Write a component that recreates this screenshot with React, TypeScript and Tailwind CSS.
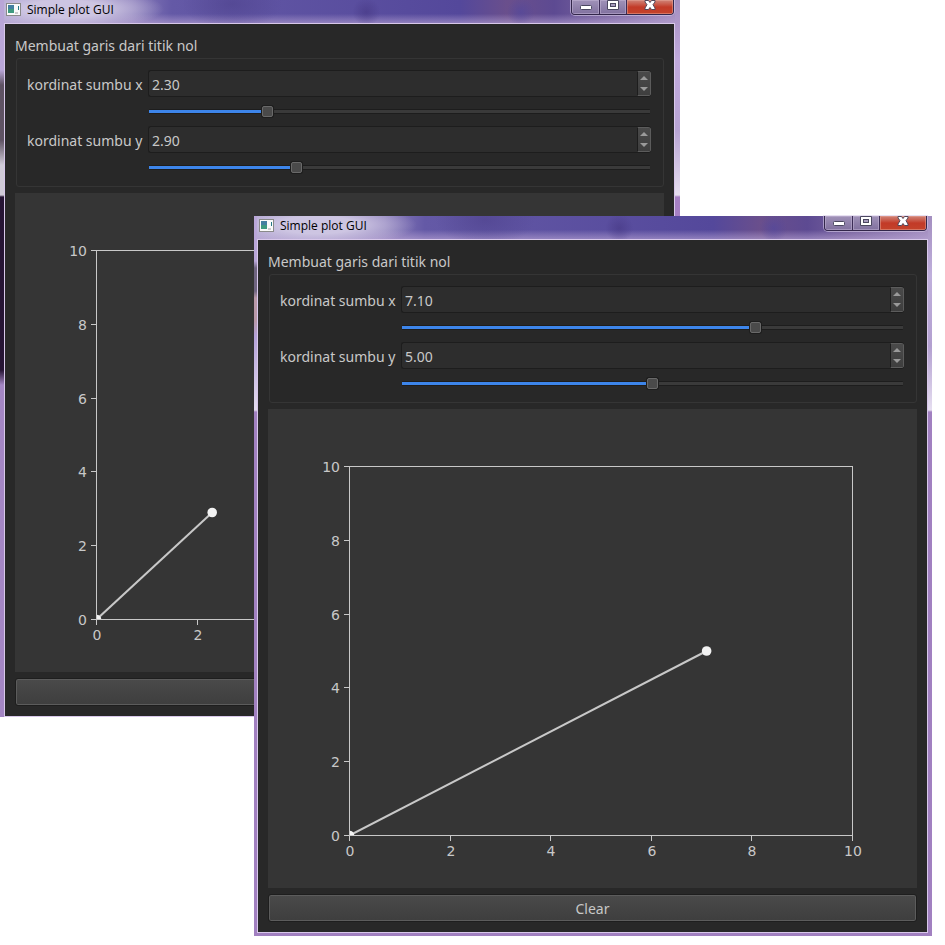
import { useId, useState } from "react";

const MAX = 10;
const TICKS = [0, 2, 4, 6, 8, 10];
const PLOT = { left: 81.5, right: 584.5, top: 57.5, bottom: 426.5 };

const toX = (v: number) => PLOT.left + ((PLOT.right - PLOT.left) * v) / MAX;
const toY = (v: number) => PLOT.bottom - ((PLOT.bottom - PLOT.top) * v) / MAX;
const snap = (v: number) => Math.floor(v) + 0.5;
const clamp = (v: number) => Math.min(MAX, Math.max(0, Number.isFinite(v) ? v : 0));

type AxisControlProps = {
  id: string;
  label: string;
  value: number;
  onChange: (value: number) => void;
};

function AxisControl({ id, label, value, onChange }: AxisControlProps) {
  const fill = (value / MAX) * 100;
  return (
    <div className="grid grid-cols-[114px_minmax(0,1fr)] gap-x-2">
      <label htmlFor={id} className="self-end whitespace-nowrap">
        {label}
      </label>
      <div className="-ml-px flex h-[27px] overflow-hidden rounded-[3px] border border-r-0 border-[#1d1d1d] bg-[#2d2d2d]">
        <input
          id={id}
          type="number"
          min={0}
          max={MAX}
          step={0.1}
          value={value.toFixed(2)}
          onChange={(e) => onChange(clamp(Number(e.target.value)))}
          className="min-w-0 flex-1 bg-transparent px-[3px] pt-[2px] outline-none [appearance:textfield] [&::-webkit-inner-spin-button]:appearance-none"
        />
        <div className="flex w-[14px] flex-col rounded-r-[2px] border border-[#5c5c5c] border-l-[#1d1d1d] bg-linear-to-b from-[#4a4a4a] to-[#3e3e3e]">
          <button
            type="button"
            aria-label={`${label} up`}
            onClick={() => onChange(clamp(value + 0.1))}
            className="flex flex-1 items-center justify-center"
          >
            <svg className="h-1 w-2" viewBox="0 0 8 4">
              <path d="M0 4 4 0 8 4Z" fill="#9a9a9a" />
            </svg>
          </button>
          <button
            type="button"
            aria-label={`${label} down`}
            onClick={() => onChange(clamp(value - 0.1))}
            className="flex flex-1 items-center justify-center"
          >
            <svg className="h-1 w-2" viewBox="0 0 8 4">
              <path d="M0 0H8L4 4Z" fill="#9a9a9a" />
            </svg>
          </button>
        </div>
      </div>
      <div className="col-start-2 mr-px flex h-[29px] items-center">
        <input
          type="range"
          aria-label={`${label} slider`}
          min={0}
          max={MAX}
          step={0.1}
          value={value}
          onChange={(e) => onChange(Number(e.target.value))}
          style={{
            backgroundImage: `linear-gradient(to right, #3d85ea ${fill}%, #3a3a3a ${fill}%)`,
          }}
          className="h-[5px] w-full appearance-none rounded-[1px] border-y border-[#1d1d1d] outline-none [&::-webkit-slider-thumb]:h-[11px] [&::-webkit-slider-thumb]:w-[11px] [&::-webkit-slider-thumb]:appearance-none [&::-webkit-slider-thumb]:rounded-[2px] [&::-webkit-slider-thumb]:border [&::-webkit-slider-thumb]:border-[#696969] [&::-webkit-slider-thumb]:bg-[#4a4a4a] [&::-webkit-slider-thumb]:shadow-[0_0_0_1px_#1d1d1d]"
        />
      </div>
    </div>
  );
}

function Plot({ x, y }: { x: number; y: number }) {
  const clipId = useId();
  return (
    <svg
      viewBox="0 0 649 479"
      className="block h-auto w-full bg-[#353535] font-['DejaVu_Sans',sans-serif] text-[14px]"
      role="img"
      aria-label="plot"
    >
      <defs>
        <clipPath id={clipId}>
          <rect x="81" y="57" width="504" height="370" />
        </clipPath>
      </defs>
      <g clipPath={`url(#${clipId})`}>
        <line x1={toX(0)} y1={toY(0)} x2={toX(x)} y2={toY(y)} stroke="#c8c8c8" strokeWidth="2" />
        <circle cx={toX(0)} cy={toY(0)} r="4.8" fill="#f2f2f2" />
        <circle cx={toX(x)} cy={toY(y)} r="4.8" fill="#f2f2f2" />
      </g>
      <rect x="81.5" y="57.5" width="503" height="369" fill="none" stroke="#c8c8c8" />
      {TICKS.map((t) => (
        <g key={t} fill="#c8c8c8">
          <path d={`M${snap(toX(t))} 427v5M81 ${snap(toY(t))}h-5`} stroke="#c8c8c8" />
          <text x={Math.floor(toX(t)) + 1} y="447" textAnchor="middle">
            {t}
          </text>
          <text x="72" y={Math.floor(toY(t)) + 6} textAnchor="end">
            {t}
          </text>
        </g>
      ))}
    </svg>
  );
}

function TitleBar() {
  return (
    <header className="flex h-[23px] justify-between bg-[radial-gradient(ellipse_100px_22px_at_60px_9px,#cdc5e2_40%,transparent),radial-gradient(ellipse_14px_14px_at_54%_12px,#46388499,transparent),radial-gradient(ellipse_14px_14px_at_77%_12px,#50479e99,transparent),radial-gradient(ellipse_50px_26px_at_34%_4px,#4d418c99,transparent),linear-gradient(to_bottom,transparent_60%,#b7a3d399),linear-gradient(to_right,#a89acb,#8a7dba_19%,#6459a6_25%,#54489b_68%,#6a4f8c_75%,#5d4a92_82%,#75609c_88%,#a48fc0)]">
      <div className="flex h-[19px] items-center gap-[6px] pl-[2px]">
        <svg className="h-[13px] w-[15px]" viewBox="0 0 15 13">
          <rect x=".5" y=".5" width="14" height="12" fill="#fafafa" stroke="#8a8a8a" />
          <rect x="2" y="2" width="6" height="8" fill="#3f9a80" />
          <rect x="2" y="2" width="6" height="4" fill="#437fa0" />
          <rect x="9" y="9" width="3" height="2" fill="#ccc" />
          <rect x="12" y="3" width="1" height="4" fill="#267a86" />
        </svg>
        <h1 className="font-['Open_Sans','Noto_Sans',sans-serif] text-[12px] leading-4 text-black">
          Simple plot GUI
        </h1>
      </div>
      <div className="mr-px flex h-[15px] overflow-hidden rounded-b-[4px] border border-t-0 border-[#32264a] shadow-[0_0_0_1px_#d9cdea99]">
        <button
          type="button"
          aria-label="Minimize"
          className="flex w-[28px] justify-center border-r border-[#3b2c55] bg-linear-to-b from-[#a092b8] to-[#81719f] pt-[5px] shadow-[inset_0_0_0_1px_#c5b8d880]"
        >
          <svg className="h-[5px] w-[12px]" viewBox="0 0 12 5">
            <rect x=".5" y=".5" width="11" height="4" rx="1" fill="#fff" stroke="#4b4860" />
          </svg>
        </button>
        <button
          type="button"
          aria-label="Maximize"
          className="flex w-[27px] justify-center border-r border-[#3b2c55] bg-linear-to-b from-[#a092b8] to-[#81719f] shadow-[inset_0_0_0_1px_#c5b8d880]"
        >
          <svg className="h-[10px] w-[12px]" viewBox="0 0 12 10">
            <path d="M.5 .5H11.500V9.500H.5Z" fill="#fff" stroke="#4b4860" />
            <rect x="3.500" y="3.500" width="5" height="3" fill="#a79bbd" stroke="#4b4860" />
          </svg>
        </button>
        <button
          type="button"
          aria-label="Close"
          className="flex w-[46px] justify-center bg-linear-to-b from-[#cf8378] via-[#c23a28] to-[#c4432b] shadow-[inset_0_0_0_1px_#e8a79a80]"
        >
          <svg className="h-[10px] w-[12px]" viewBox="0 0 12 10">
            <path
              d="M1 .5H4.500L6 2.500 7.500 .5H11V2L9 4.700 11 8V9.500H7.500L6 7.500 4.500 9.500H1V8L3 4.700 1 2Z"
              fill="#fff"
              stroke="#514759"
            />
          </svg>
        </button>
      </div>
    </header>
  );
}

type PlotWindowProps = {
  id: string;
  initialX: number;
  initialY: number;
  className: string;
};

function PlotWindow({ id, initialX, initialY, className }: PlotWindowProps) {
  const [x, setX] = useState(initialX);
  const [y, setY] = useState(initialY);
  return (
    <section className={`absolute ${className}`}>
      <TitleBar />
      <div className="border border-[#d8c8ea] bg-[#282828] px-[10px] py-[10px] text-[14px] leading-6 text-[#c8c8c8]">
        <fieldset>
          <legend>Membuat garis dari titik nol</legend>
          <div className="ml-px flex flex-col rounded-[3px] border border-[#353535] pt-[11px] pr-[12px] pb-[4px] pl-[10px]">
            <AxisControl id={`${id}-x`} label="kordinat sumbu x" value={x} onChange={setX} />
            <AxisControl id={`${id}-y`} label="kordinat sumbu y" value={y} onChange={setY} />
          </div>
        </fieldset>
        <div className="mt-[6px]">
          <Plot x={x} y={y} />
        </div>
        <button
          type="button"
          onClick={() => {
            setX(0);
            setY(0);
          }}
          className="mt-[6px] block h-[28px] w-full rounded-[3px] border border-[#1e1e1e] bg-linear-to-b from-[#4a4a4a] to-[#3e3e3e] pt-px shadow-[inset_0_0_0_1px_#5c5c5c]"
        >
          Clear
        </button>
      </div>
    </section>
  );
}

export default function App() {
  return (
    <main className="relative min-h-screen overflow-hidden bg-white font-['Noto_Sans','Open_Sans',sans-serif]">
      <PlotWindow
        id="back"
        initialX={2.3}
        initialY={2.9}
        className="top-0 right-[265px] left-0 pr-[5px] pl-1 [background:linear-gradient(to_bottom,#b9a6d8,#b9a6d8_70px,#5e5263_85px,#5e5263_140px,#d0cbd8_165px,#d0cbd8_195px,#261434_197px,#261434_370px,#a486c4_385px,#a486c4)_left/10px_100%_no-repeat,linear-gradient(to_bottom,#a48fc0,#c0a9dc_60px,#b8a4d4_130px,#e6def0_195px,#a680c4_197px)]"
      />
      <PlotWindow
        id="front"
        initialX={7.1}
        initialY={5}
        className="top-[216px] right-[13px] left-[254px] pr-1 pb-[3px] pl-[3px] [background:linear-gradient(to_bottom,#b9a6d8,#b9a6d8_45px,#6f6480_52px,#6f6480_75px,#b898a8_82px,#b898a8_105px,#b3a0d8_120px,#e4dcf0_194px,#a180c0_196px,#a180c0)_left/10px_100%_no-repeat,linear-gradient(to_bottom,#a48fc0,#c0b0dc_60px,#b3a0d0_130px,#e6def0_194px,#a180c0_196px)]"
      />
    </main>
  );
}
